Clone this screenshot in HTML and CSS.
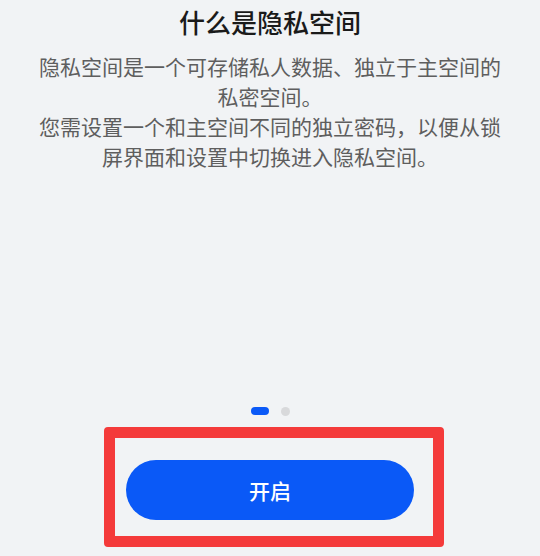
FILE: index.html
```html
<!DOCTYPE html>
<html lang="zh-CN">
<head>
<meta charset="utf-8">
<title>什么是隐私空间</title>
<link rel="stylesheet" href="styles.css">
</head>
<body>
<div class="page">
  <div class="intro">
    <h1 class="title">什么是隐私空间</h1>
    <p class="desc">隐私空间是一个可存储私人数据、独立于主空间的私密空间。<br>您需设置一个和主空间不同的独立密码，以便从锁屏界面和设置中切换进入隐私空间。</p>
  </div>
  <div class="dots">
    <span class="dot active"></span>
    <span class="dot"></span>
  </div>
  <div class="action">
    <button class="btn">开启</button>
    <div class="highlight"></div>
  </div>
</div>
</body>
</html>
```

FILE: styles.css
```css
html, body {
  margin: 0;
  padding: 0;
  background: #f1f3f5;
}
body {
  font-family: "Noto Sans CJK SC", "Noto Sans", sans-serif;
}
.page {
  height: 556px;
  display: flex;
  flex-direction: column;
  align-items: center;
}
.intro {
  flex: 1;
  display: flex;
  flex-direction: column;
  align-items: center;
}
.title {
  margin: 4px 0 0;
  font-size: 26px;
  line-height: 36px;
  font-weight: 500;
  color: #1a1a1a;
}
.desc {
  margin: 11px 0 0;
  width: 470px;
  font-size: 21px;
  line-height: 30px;
  color: #5e5e5e;
  text-align: center;
}
.dots {
  display: flex;
  align-items: center;
  gap: 12px;
  height: 8px;
}
.dot {
  width: 9px;
  height: 9px;
  border-radius: 50%;
  background: #d8d9db;
}
.dot.active {
  width: 18px;
  height: 8px;
  border-radius: 4px;
  background: #0a59f7;
}
.action {
  position: relative;
  margin-top: 45px;
  margin-bottom: 36px;
}
.btn {
  display: block;
  width: 288px;
  height: 60px;
  border: 0;
  border-radius: 30px;
  background: #0a59f7;
  color: #ffffff;
  font-family: "Noto Sans CJK SC", "Noto Sans", sans-serif;
  font-size: 21px;
  font-weight: 500;
  letter-spacing: 0;
  padding: 0;
}
.highlight {
  position: absolute;
  left: -22px;
  top: -33px;
  width: 318px;
  height: 98px;
  border: 11px solid #f43a3a;
  border-radius: 4px;
}
```
